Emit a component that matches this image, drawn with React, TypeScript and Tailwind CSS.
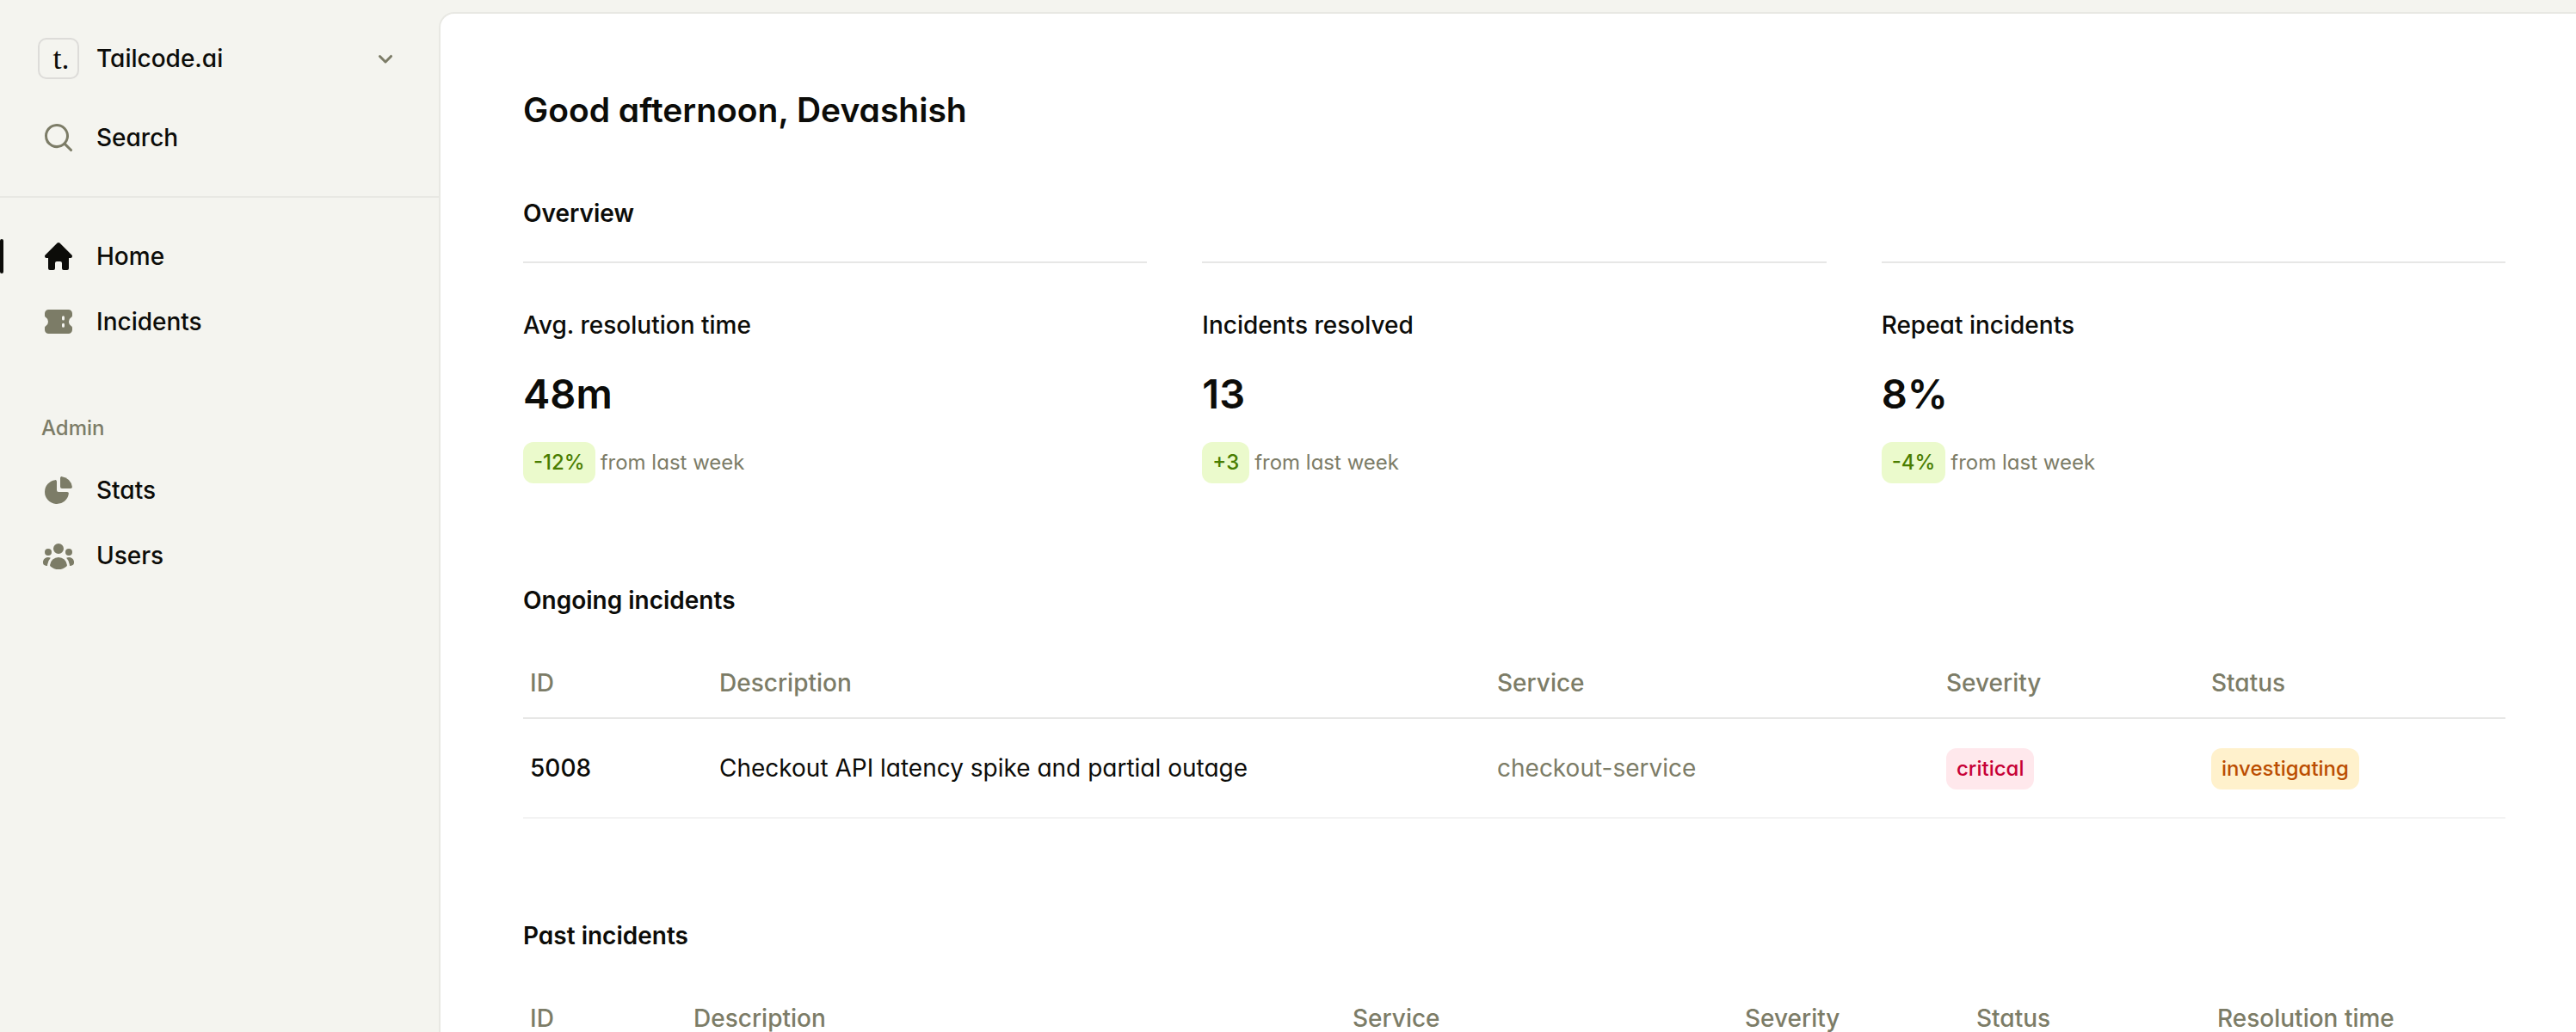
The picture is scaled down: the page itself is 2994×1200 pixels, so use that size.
import {
  HiMiniChartPie,
  HiMiniHome,
  HiMiniMagnifyingGlass,
  HiMiniTicket,
  HiMiniUserGroup,
} from "react-icons/hi2";
import type { ReactNode } from "react";
import type { IconType } from "react-icons";
import clsx from "clsx";

const mainNav = [
  { label: "Home", icon: HiMiniHome, current: true },
  { label: "Incidents", icon: HiMiniTicket, current: false },
];

const adminNav = [
  { label: "Stats", icon: HiMiniChartPie },
  { label: "Users", icon: HiMiniUserGroup },
];

const stats = [
  { title: "Avg. resolution time", value: "48m", change: "-12%" },
  { title: "Incidents resolved", value: "13", change: "+3" },
  { title: "Repeat incidents", value: "8%", change: "-4%" },
];

const ongoingColumns = [
  { label: "ID", width: "w-[196px]" },
  { label: "Description", width: "" },
  { label: "Service", width: "w-[522px]" },
  { label: "Severity", width: "w-[308px]" },
  { label: "Status", width: "w-[374px]" },
];

const pastColumns = [
  { label: "ID", width: "w-[166px]" },
  { label: "Description", width: "" },
  { label: "Service", width: "w-[456px]" },
  { label: "Severity", width: "w-[269px]" },
  { label: "Status", width: "w-[280px]" },
  { label: "Resolution time", width: "w-[367px]" },
];

const ongoing = [
  {
    id: "5008",
    description: "Checkout API latency spike and partial outage",
    service: "checkout-service",
    severity: "critical",
    status: "investigating",
  },
];

const badgeColors = {
  lime: "bg-lime-400/20 text-lime-700",
  rose: "bg-rose-400/15 text-rose-700",
  amber: "bg-amber-400/20 text-amber-700",
};

function Badge({ color, children }: { color: keyof typeof badgeColors; children: ReactNode }) {
  return (
    <span
      className={clsx(
        "inline-flex items-center rounded-xl px-3 py-1 text-[24px] leading-10 font-medium",
        badgeColors[color]
      )}
    >
      {children}
    </span>
  );
}

function SidebarItem({
  label,
  icon: Icon,
  current = false,
}: {
  label: string;
  icon: IconType;
  current?: boolean;
}) {
  return (
    <a
      href="#"
      aria-current={current ? "page" : undefined}
      className="relative flex items-center gap-6 rounded-2xl p-4 text-[28px] leading-10 font-medium"
    >
      {current && <span className="absolute inset-y-4 -left-8 w-1 rounded-full bg-[#0c0c09]" />}
      <Icon className={clsx("size-10 shrink-0", current ? "text-[#0c0c09]" : "text-[#7c7c67]")} />
      {label}
    </a>
  );
}

function Subheading({ children }: { children: ReactNode }) {
  return <h2 className="text-[28px] leading-12 font-semibold">{children}</h2>;
}

function TableHead({ columns }: { columns: { label: string; width: string }[] }) {
  return (
    <thead className="text-[#7c7c67]">
      <tr>
        {columns.map((column) => (
          <th
            key={column.label}
            className={clsx(
              "border-b-2 border-[#e7e7e6] py-4 pl-8 font-medium first:pl-2",
              column.width
            )}
          >
            {column.label}
          </th>
        ))}
      </tr>
    </thead>
  );
}

const tableClass =
  "mt-8 w-full table-fixed border-separate border-spacing-0 text-left text-[28px] leading-12";

export default function App() {
  return (
    <div className="flex h-screen overflow-hidden bg-[#f4f4ef] font-['Inter',sans-serif] text-[#0c0c09] antialiased [font-feature-settings:'cv11']">
      <aside className="flex w-[512px] shrink-0 flex-col">
        <div className="flex flex-col gap-5 border-b-2 border-[#e8e8e3] p-8">
          <button
            type="button"
            className="flex items-center gap-5 px-3 py-3 text-left text-[28px] leading-10 font-medium"
          >
            <span className="flex size-12 shrink-0 items-center justify-center rounded-[10px] border-2 border-[#dddcd9] pl-1.5 font-['Liberation_Serif',serif] text-[36px] font-normal">
              t.
            </span>
            <span className="grow">Tailcode.ai</span>
            <svg viewBox="0 0 16 16" fill="#7c7c67" className="mr-1 size-8" aria-hidden="true">
              <path
                fillRule="evenodd"
                clipRule="evenodd"
                d="M4.22 6.22a.75.75 0 0 1 1.06 0L8 8.94l2.72-2.72a.75.75 0 1 1 1.06 1.06l-3.25 3.25a.75.75 0 0 1-1.06 0L4.22 7.28a.75.75 0 0 1 0-1.06Z"
              />
            </svg>
          </button>
          <SidebarItem label="Search" icon={HiMiniMagnifyingGlass} />
        </div>

        <nav className="flex flex-col gap-16 p-8">
          <div className="flex flex-col gap-1">
            {mainNav.map((item) => (
              <SidebarItem key={item.label} {...item} />
            ))}
          </div>
          <div className="flex flex-col gap-1">
            <h3 className="mb-2 px-4 text-[24px] leading-12 font-medium text-[#7c7c67]">Admin</h3>
            {adminNav.map((item) => (
              <SidebarItem key={item.label} {...item} />
            ))}
          </div>
        </nav>
      </aside>

      <main className="mt-4 min-w-0 grow overflow-y-auto rounded-tl-2xl bg-white pt-20 pr-[82px] pl-24 ring-2 ring-[#e8e8e3] [scrollbar-width:none]">
        <div className="max-w-[2304px]">
          <h1 className="text-[39px] leading-16 font-semibold">Good afternoon, Devashish</h1>

          <section className="mt-16">
            <Subheading>Overview</Subheading>
            <div className="mt-8 grid grid-cols-3 gap-16">
              {stats.map((stat) => (
                <div key={stat.title} className="border-t-2 border-[#e7e7e6]">
                  <div className="mt-12 text-[28px] leading-12 font-medium">{stat.title}</div>
                  <div className="mt-6 text-[47px] leading-16 font-semibold">{stat.value}</div>
                  <div className="mt-6 flex items-center gap-1.5 text-[24px] leading-12">
                    <Badge color="lime">{stat.change}</Badge>
                    <span className="text-[#7c7c67]">from last week</span>
                  </div>
                </div>
              ))}
            </div>
          </section>

          <section className="mt-28">
            <Subheading>Ongoing incidents</Subheading>
            <table className={tableClass}>
              <TableHead columns={ongoingColumns} />
              <tbody>
                {ongoing.map((incident) => (
                  <tr
                    key={incident.id}
                    className="*:border-b-2 *:border-[#f3f3f3] *:py-8 *:pl-8 *:first:pl-2"
                  >
                    <td className="font-medium">{incident.id}</td>
                    <td>{incident.description}</td>
                    <td className="text-[#7c7c67]">{incident.service}</td>
                    <td>
                      <Badge color="rose">{incident.severity}</Badge>
                    </td>
                    <td>
                      <Badge color="amber">{incident.status}</Badge>
                    </td>
                  </tr>
                ))}
              </tbody>
            </table>
          </section>

          <section className="mt-28">
            <Subheading>Past incidents</Subheading>
            <table className={tableClass}>
              <TableHead columns={pastColumns} />
            </table>
          </section>
        </div>
      </main>
    </div>
  );
}
